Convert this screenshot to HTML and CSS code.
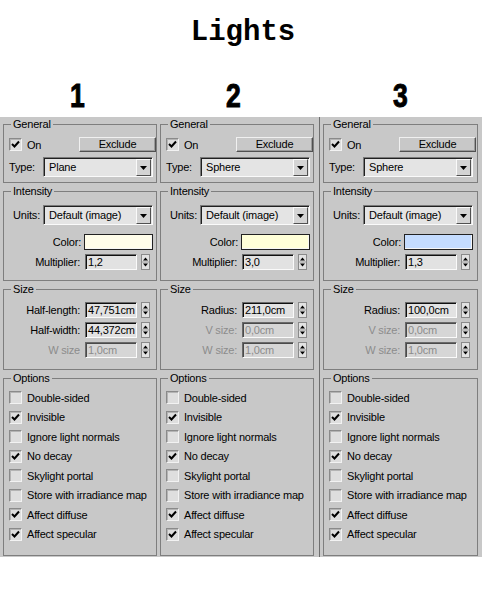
FILE: index.html
```html
<!DOCTYPE html>
<html>
<head>
<meta charset="utf-8">
<link rel="stylesheet" href="styles.css">
</head>
<body>
<div class="title">Lights</div>
<div class="nums">
  <div class="num n1"><span>1</span></div>
  <div class="num n2"><span>2</span></div>
  <div class="num n3"><span>3</span></div>
</div>
<div class="panel">

  <!-- Column 1 -->
  <div class="col c1">
    <div class="group general">
      <span class="legend">General</span>
      <div class="row row-on"><div class="onwrap"><span class="cb"><svg width="9" height="9" viewBox="0 0 9 9"><polyline points="1,4 3.5,6.5 8,1.5" fill="none" stroke="#000" stroke-width="2"/></svg></span><span class="lbl">On</span></div><span class="btn">Exclude</span></div>
      <div class="row row-dd"><span class="ddlabel left">Type:</span><div class="dd"><span class="ddtext">Plane</span><span class="ddbtn"><svg width="7" height="4" viewBox="0 0 7 4"><path d="M0 0h7L3.5 4z" fill="#000"/></svg></span></div></div>
    </div>
    <div class="group intensity">
      <span class="legend">Intensity</span>
      <div class="row row-dd units"><span class="ddlabel right">Units:</span><div class="dd"><span class="ddtext">Default (image)</span><span class="ddbtn"><svg width="7" height="4" viewBox="0 0 7 4"><path d="M0 0h7L3.5 4z" fill="#000"/></svg></span></div></div>
      <div class="row row-color"><span class="clabel">Color:</span><span class="swatch sw1"></span></div>
      <div class="row row-field mult"><span class="flabel">Multiplier:</span><span class="field">1,2</span><span class="spin"><svg width="9" height="16" viewBox="0 0 9 16"><rect x="0.5" y="0.5" width="8" height="15" fill="#e2e2e2" stroke="#8a8a8a"/><path d="M1 8h7" stroke="#9a9a9a"/><path d="M2 6.5h5L4.5 3.5z M2 9.5h5L4.5 12.5z" fill="#000"/></svg></span></div>
    </div>
    <div class="group size">
      <span class="legend">Size</span>
      <div class="row row-field first"><span class="flabel">Half-length:</span><span class="field">47,751cm</span><span class="spin"><svg width="9" height="16" viewBox="0 0 9 16"><rect x="0.5" y="0.5" width="8" height="15" fill="#e2e2e2" stroke="#8a8a8a"/><path d="M1 8h7" stroke="#9a9a9a"/><path d="M2 6.5h5L4.5 3.5z M2 9.5h5L4.5 12.5z" fill="#000"/></svg></span></div>
      <div class="row row-field"><span class="flabel">Half-width:</span><span class="field">44,372cm</span><span class="spin"><svg width="9" height="16" viewBox="0 0 9 16"><rect x="0.5" y="0.5" width="8" height="15" fill="#e2e2e2" stroke="#8a8a8a"/><path d="M1 8h7" stroke="#9a9a9a"/><path d="M2 6.5h5L4.5 3.5z M2 9.5h5L4.5 12.5z" fill="#000"/></svg></span></div>
      <div class="row row-field disabled"><span class="flabel">W size</span><span class="field">1,0cm</span><span class="spin"><svg width="9" height="16" viewBox="0 0 9 16"><rect x="0.5" y="0.5" width="8" height="15" fill="#e2e2e2" stroke="#8a8a8a"/><path d="M1 8h7" stroke="#9a9a9a"/><path d="M2 6.5h5L4.5 3.5z M2 9.5h5L4.5 12.5z" fill="#000"/></svg></span></div>
    </div>
    <div class="group options">
      <span class="legend">Options</span>
      <div class="opts">
        <div class="opt"><span class="cb"></span><span class="lbl">Double-sided</span></div>
        <div class="opt"><span class="cb"><svg width="9" height="9" viewBox="0 0 9 9"><polyline points="1,4 3.5,6.5 8,1.5" fill="none" stroke="#000" stroke-width="2"/></svg></span><span class="lbl">Invisible</span></div>
        <div class="opt"><span class="cb"></span><span class="lbl">Ignore light normals</span></div>
        <div class="opt"><span class="cb"><svg width="9" height="9" viewBox="0 0 9 9"><polyline points="1,4 3.5,6.5 8,1.5" fill="none" stroke="#000" stroke-width="2"/></svg></span><span class="lbl">No decay</span></div>
        <div class="opt"><span class="cb"></span><span class="lbl">Skylight portal</span></div>
        <div class="opt"><span class="cb"></span><span class="lbl">Store with irradiance map</span></div>
        <div class="opt"><span class="cb"><svg width="9" height="9" viewBox="0 0 9 9"><polyline points="1,4 3.5,6.5 8,1.5" fill="none" stroke="#000" stroke-width="2"/></svg></span><span class="lbl">Affect diffuse</span></div>
        <div class="opt"><span class="cb"><svg width="9" height="9" viewBox="0 0 9 9"><polyline points="1,4 3.5,6.5 8,1.5" fill="none" stroke="#000" stroke-width="2"/></svg></span><span class="lbl">Affect specular</span></div>
      </div>
    </div>
  </div>

  <!-- Column 2 -->
  <div class="col c2">
    <div class="group general">
      <span class="legend">General</span>
      <div class="row row-on"><div class="onwrap"><span class="cb"><svg width="9" height="9" viewBox="0 0 9 9"><polyline points="1,4 3.5,6.5 8,1.5" fill="none" stroke="#000" stroke-width="2"/></svg></span><span class="lbl">On</span></div><span class="btn">Exclude</span></div>
      <div class="row row-dd"><span class="ddlabel left">Type:</span><div class="dd"><span class="ddtext">Sphere</span><span class="ddbtn"><svg width="7" height="4" viewBox="0 0 7 4"><path d="M0 0h7L3.5 4z" fill="#000"/></svg></span></div></div>
    </div>
    <div class="group intensity">
      <span class="legend">Intensity</span>
      <div class="row row-dd units"><span class="ddlabel right">Units:</span><div class="dd"><span class="ddtext">Default (image)</span><span class="ddbtn"><svg width="7" height="4" viewBox="0 0 7 4"><path d="M0 0h7L3.5 4z" fill="#000"/></svg></span></div></div>
      <div class="row row-color"><span class="clabel">Color:</span><span class="swatch sw2"></span></div>
      <div class="row row-field mult"><span class="flabel">Multiplier:</span><span class="field">3,0</span><span class="spin"><svg width="9" height="16" viewBox="0 0 9 16"><rect x="0.5" y="0.5" width="8" height="15" fill="#e2e2e2" stroke="#8a8a8a"/><path d="M1 8h7" stroke="#9a9a9a"/><path d="M2 6.5h5L4.5 3.5z M2 9.5h5L4.5 12.5z" fill="#000"/></svg></span></div>
    </div>
    <div class="group size">
      <span class="legend">Size</span>
      <div class="row row-field first"><span class="flabel">Radius:</span><span class="field">211,0cm</span><span class="spin"><svg width="9" height="16" viewBox="0 0 9 16"><rect x="0.5" y="0.5" width="8" height="15" fill="#e2e2e2" stroke="#8a8a8a"/><path d="M1 8h7" stroke="#9a9a9a"/><path d="M2 6.5h5L4.5 3.5z M2 9.5h5L4.5 12.5z" fill="#000"/></svg></span></div>
      <div class="row row-field disabled"><span class="flabel">V size:</span><span class="field">0,0cm</span><span class="spin"><svg width="9" height="16" viewBox="0 0 9 16"><rect x="0.5" y="0.5" width="8" height="15" fill="#e2e2e2" stroke="#8a8a8a"/><path d="M1 8h7" stroke="#9a9a9a"/><path d="M2 6.5h5L4.5 3.5z M2 9.5h5L4.5 12.5z" fill="#000"/></svg></span></div>
      <div class="row row-field disabled"><span class="flabel">W size:</span><span class="field">1,0cm</span><span class="spin"><svg width="9" height="16" viewBox="0 0 9 16"><rect x="0.5" y="0.5" width="8" height="15" fill="#e2e2e2" stroke="#8a8a8a"/><path d="M1 8h7" stroke="#9a9a9a"/><path d="M2 6.5h5L4.5 3.5z M2 9.5h5L4.5 12.5z" fill="#000"/></svg></span></div>
    </div>
    <div class="group options">
      <span class="legend">Options</span>
      <div class="opts">
        <div class="opt"><span class="cb"></span><span class="lbl">Double-sided</span></div>
        <div class="opt"><span class="cb"><svg width="9" height="9" viewBox="0 0 9 9"><polyline points="1,4 3.5,6.5 8,1.5" fill="none" stroke="#000" stroke-width="2"/></svg></span><span class="lbl">Invisible</span></div>
        <div class="opt"><span class="cb"></span><span class="lbl">Ignore light normals</span></div>
        <div class="opt"><span class="cb"><svg width="9" height="9" viewBox="0 0 9 9"><polyline points="1,4 3.5,6.5 8,1.5" fill="none" stroke="#000" stroke-width="2"/></svg></span><span class="lbl">No decay</span></div>
        <div class="opt"><span class="cb"></span><span class="lbl">Skylight portal</span></div>
        <div class="opt"><span class="cb"></span><span class="lbl">Store with irradiance map</span></div>
        <div class="opt"><span class="cb"><svg width="9" height="9" viewBox="0 0 9 9"><polyline points="1,4 3.5,6.5 8,1.5" fill="none" stroke="#000" stroke-width="2"/></svg></span><span class="lbl">Affect diffuse</span></div>
        <div class="opt"><span class="cb"><svg width="9" height="9" viewBox="0 0 9 9"><polyline points="1,4 3.5,6.5 8,1.5" fill="none" stroke="#000" stroke-width="2"/></svg></span><span class="lbl">Affect specular</span></div>
      </div>
    </div>
  </div>

  <!-- Column 3 -->
  <div class="col c3">
    <div class="group general">
      <span class="legend">General</span>
      <div class="row row-on"><div class="onwrap"><span class="cb"><svg width="9" height="9" viewBox="0 0 9 9"><polyline points="1,4 3.5,6.5 8,1.5" fill="none" stroke="#000" stroke-width="2"/></svg></span><span class="lbl">On</span></div><span class="btn">Exclude</span></div>
      <div class="row row-dd"><span class="ddlabel left">Type:</span><div class="dd"><span class="ddtext">Sphere</span><span class="ddbtn"><svg width="7" height="4" viewBox="0 0 7 4"><path d="M0 0h7L3.5 4z" fill="#000"/></svg></span></div></div>
    </div>
    <div class="group intensity">
      <span class="legend">Intensity</span>
      <div class="row row-dd units"><span class="ddlabel right">Units:</span><div class="dd"><span class="ddtext">Default (image)</span><span class="ddbtn"><svg width="7" height="4" viewBox="0 0 7 4"><path d="M0 0h7L3.5 4z" fill="#000"/></svg></span></div></div>
      <div class="row row-color"><span class="clabel">Color:</span><span class="swatch sw3"></span></div>
      <div class="row row-field mult"><span class="flabel">Multiplier:</span><span class="field">1,3</span><span class="spin"><svg width="9" height="16" viewBox="0 0 9 16"><rect x="0.5" y="0.5" width="8" height="15" fill="#e2e2e2" stroke="#8a8a8a"/><path d="M1 8h7" stroke="#9a9a9a"/><path d="M2 6.5h5L4.5 3.5z M2 9.5h5L4.5 12.5z" fill="#000"/></svg></span></div>
    </div>
    <div class="group size">
      <span class="legend">Size</span>
      <div class="row row-field first"><span class="flabel">Radius:</span><span class="field">100,0cm</span><span class="spin"><svg width="9" height="16" viewBox="0 0 9 16"><rect x="0.5" y="0.5" width="8" height="15" fill="#e2e2e2" stroke="#8a8a8a"/><path d="M1 8h7" stroke="#9a9a9a"/><path d="M2 6.5h5L4.5 3.5z M2 9.5h5L4.5 12.5z" fill="#000"/></svg></span></div>
      <div class="row row-field disabled"><span class="flabel">V size:</span><span class="field">0,0cm</span><span class="spin"><svg width="9" height="16" viewBox="0 0 9 16"><rect x="0.5" y="0.5" width="8" height="15" fill="#e2e2e2" stroke="#8a8a8a"/><path d="M1 8h7" stroke="#9a9a9a"/><path d="M2 6.5h5L4.5 3.5z M2 9.5h5L4.5 12.5z" fill="#000"/></svg></span></div>
      <div class="row row-field disabled"><span class="flabel">W size:</span><span class="field">1,0cm</span><span class="spin"><svg width="9" height="16" viewBox="0 0 9 16"><rect x="0.5" y="0.5" width="8" height="15" fill="#e2e2e2" stroke="#8a8a8a"/><path d="M1 8h7" stroke="#9a9a9a"/><path d="M2 6.5h5L4.5 3.5z M2 9.5h5L4.5 12.5z" fill="#000"/></svg></span></div>
    </div>
    <div class="group options">
      <span class="legend">Options</span>
      <div class="opts">
        <div class="opt"><span class="cb"></span><span class="lbl">Double-sided</span></div>
        <div class="opt"><span class="cb"><svg width="9" height="9" viewBox="0 0 9 9"><polyline points="1,4 3.5,6.5 8,1.5" fill="none" stroke="#000" stroke-width="2"/></svg></span><span class="lbl">Invisible</span></div>
        <div class="opt"><span class="cb"></span><span class="lbl">Ignore light normals</span></div>
        <div class="opt"><span class="cb"><svg width="9" height="9" viewBox="0 0 9 9"><polyline points="1,4 3.5,6.5 8,1.5" fill="none" stroke="#000" stroke-width="2"/></svg></span><span class="lbl">No decay</span></div>
        <div class="opt"><span class="cb"></span><span class="lbl">Skylight portal</span></div>
        <div class="opt"><span class="cb"></span><span class="lbl">Store with irradiance map</span></div>
        <div class="opt"><span class="cb"><svg width="9" height="9" viewBox="0 0 9 9"><polyline points="1,4 3.5,6.5 8,1.5" fill="none" stroke="#000" stroke-width="2"/></svg></span><span class="lbl">Affect diffuse</span></div>
        <div class="opt"><span class="cb"><svg width="9" height="9" viewBox="0 0 9 9"><polyline points="1,4 3.5,6.5 8,1.5" fill="none" stroke="#000" stroke-width="2"/></svg></span><span class="lbl">Affect specular</span></div>
      </div>
    </div>
  </div>

</div>
</body>
</html>
```
FILE: styles.css
```css
* { box-sizing: border-box; }
html, body { margin: 0; background: #fff; }
body {
  padding-top: 17px;
  width: 482px;
  font-family: "Liberation Sans", Arial, sans-serif;
  font-size: 11px;
  color: #000;
}
.title {
  height: 32px;
  line-height: 32px;
  font-family: "Liberation Mono", "Courier New", monospace;
  font-weight: bold;
  font-size: 29px;
  text-align: center;
  padding-left: 4px;
}
.nums {
  display: flex;
  margin-top: 29px;
  height: 34px;
}
.num {
  text-align: center;
  font-family: "Liberation Sans", Arial, sans-serif;
  font-weight: bold;
  font-size: 34px;
  line-height: 34px;
}
.num span { display: inline-block; transform: scaleX(0.78); -webkit-text-stroke: 1px #000; }
.n1 { width: 158px; padding-right: 4px; }
.n2 { width: 161px; padding-right: 11px; }
.n3 { width: 163px; padding-right: 1px; }

.panel {
  margin-top: 5px;
  display: flex;
  background: #c8c8c8;
  letter-spacing: -0.2px;
}
.col { padding-bottom: 1px; }
.c1 { width: 158px; padding-left: 3px; }
.c2 { width: 161px; padding-left: 2px; }
.c3 { width: 163px; padding-left: 3px; border-left: 1px solid #6e6e6e; }

.group {
  width: 154px;
  border: 1px solid #7e7e7e;
  padding: 0 0 0 5px;
  margin-top: 8px;
}
.c3 .group { width: 155px; }
.general { margin-top: 7px; padding-bottom: 5px; }
.intensity { padding-bottom: 10px; }
.size { padding-bottom: 11px; }
.options { padding-bottom: 11px; }

.legend {
  display: block;
  width: max-content;
  height: 13px;
  line-height: 13px;
  margin: -7px 0 0 2px;
  padding: 0 2px;
  background: #c8c8c8;
}

.row { display: flex; align-items: center; }

/* checkbox */
.cb {
  flex: none;
  width: 13px;
  height: 13px;
  border: 1px solid;
  border-color: #8a8a8a #f2f2f2 #f2f2f2 #8a8a8a;
  box-shadow: inset 1px 1px 0 #b4b4b4;
  background: #dedede;
  display: flex;
  align-items: center;
  justify-content: center;
}
.cb svg { display: block; }

.row-on { margin-top: 6px; height: 15px; }
.onwrap { width: 70px; display: flex; align-items: center; }
.onwrap .lbl { margin-left: 5px; }
.btn {
  width: 77px;
  height: 15px;
  border: 1px solid;
  border-color: #f0f0f0 #505050 #505050 #f0f0f0;
  box-shadow: inset -1px -1px 0 #9a9a9a;
  background: #c8c8c8;
  display: flex;
  align-items: center;
  justify-content: center;
  line-height: 11px;
}

/* dropdown rows */
.row-dd { margin-top: 5px; height: 20px; }
.units { margin-top: 7px; }
.ddlabel { width: 34px; flex: none; }
.ddlabel.right { text-align: right; padding-right: 3px; }
.dd {
  width: 110px;
  height: 20px;
  display: flex;
  border: 1px solid;
  border-color: #7a7a7a #fafafa #fafafa #7a7a7a;
  box-shadow: inset 1px 1px 0 #202020;
  background: #e4e4e4;
  padding: 1px 1px 0 1px;
}
.ddtext { flex: 1; padding-left: 4px; line-height: 17px; }
.ddbtn {
  width: 15px;
  height: 17px;
  border: 1px solid;
  border-color: #fafafa #505050 #505050 #fafafa;
  background: #d4d4d4;
  display: flex;
  align-items: center;
  justify-content: center;
}
.ddbtn svg { display: block; }

/* color row */
.row-color { margin-top: 9px; height: 16px; }
.clabel { width: 75px; flex: none; text-align: right; padding-right: 3px; }
.swatch {
  width: 69px;
  height: 16px;
  border: 1px solid #222;
  box-shadow: inset -1px -1px 0 #f6f6f6;
}
.sw1 { background: #fffdea; }
.sw2 { background: #ffffd8; }
.sw3 { background: #c4dcff; }

/* field rows */
.row-field { margin-top: 4px; height: 16px; }
.row-field.first { margin-top: 6px; }
.flabel { width: 76px; flex: none; text-align: right; padding-right: 5px; white-space: nowrap; }
.field {
  width: 52px;
  height: 16px;
  border: 1px solid;
  border-color: #6a6a6a #fafafa #fafafa #6a6a6a;
  box-shadow: inset 1px 1px 0 #101010;
  background: #e2e2e2;
  padding-left: 2px;
  line-height: 14px;
  white-space: nowrap;
  overflow: hidden;
}
.spin { margin-left: 4px; width: 9px; height: 16px; }
.spin svg { display: block; }
.disabled .flabel { color: #8c8c8c; }
.disabled .field {
  color: #8c8c8c;
  background: #d6d6d6;
  box-shadow: inset 1px 1px 0 #4a4a4a;
}

/* options */
.opts { margin-top: 3px; }
.opt { display: flex; align-items: center; height: 19.5px; }
.opt .lbl { margin-left: 5px; white-space: nowrap; }
```
